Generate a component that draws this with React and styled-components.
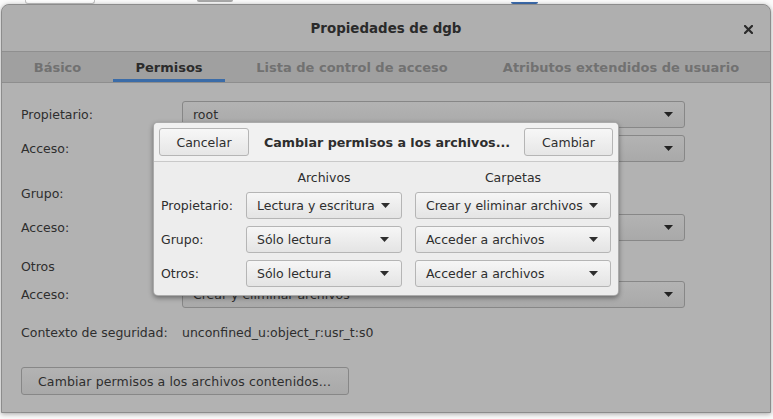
import React from "react";
import styled, { createGlobalStyle } from "styled-components";

const GlobalStyle = createGlobalStyle`
  html, body { margin: 0; padding: 0; background: #ffffff; }
  body { font-family: "DejaVu Sans", sans-serif; font-size: 12.5px; color: #2e2e2e; }
  #root { width: 773px; height: 419px; overflow: hidden; }
`;

const Screen = styled.div`
  width: 773px;
  height: 419px;
  display: flex;
  flex-direction: column;
  background: #fbfbfb;
`;

const BackStrip = styled.div`
  height: 4px;
  display: flex;
  align-items: flex-start;
  position: relative;
  z-index: 0;
`;

const BackBit = styled.div`
  margin-left: ${(p) => p.$left}px;
  width: ${(p) => p.$w}px;
  height: ${(p) => p.$h}px;
  margin-top: ${(p) => p.$top || 0}px;
  background: ${(p) => p.$bg};
  border: ${(p) => p.$border || "none"};
  border-top: none;
  border-radius: 0 0 3px 3px;
`;

const Dialog = styled.div`
  position: relative;
  z-index: 1;
  margin-left: 1px;
  width: 768px;
  height: 407px;
  background: #b2b2b2;
  border: 1px solid #8c8c8c;
  border-radius: 8px 8px 0 0;
  box-shadow: 0 1px 5px rgba(0, 0, 0, 0.35);
  display: flex;
  flex-direction: column;
`;

const TitleBar = styled.div`
  height: 46px;
  flex: none;
  display: flex;
  align-items: center;
  justify-content: center;
  position: relative;
  background: #afafaf;
  border-bottom: 1px solid #8f8f8f;
  border-radius: 8px 8px 0 0;
`;

const Title = styled.div`
  font-weight: bold;
  font-size: 13.4px;
  color: #2a2a2a;
`;

const Close = styled.div`
  position: absolute;
  right: 17px;
  top: 20px;
  width: 9px;
  height: 9px;
  display: flex;
`;

const TabBar = styled.div`
  height: 30px;
  flex: none;
  display: flex;
  background: #a0a0a0;
  border-bottom: 1px solid #8e8e8e;
`;

const Tab = styled.div`
  width: ${(p) => p.$w}px;
  flex: none;
  display: flex;
  align-items: center;
  justify-content: center;
  font-weight: bold;
  font-size: 13px;
  color: ${(p) => (p.$active ? "#2c2c2c" : "#717171")};
  box-shadow: ${(p) => (p.$active ? "inset 0 -3px 0 #3b6ca8" : "none")};
  padding-top: 1px;
  box-sizing: border-box;
`;

const Body = styled.div`
  flex: 1;
  display: flex;
  flex-direction: column;
  padding: 18px 0 0 19px;
`;

const Section = styled.div`
  display: grid;
  grid-template-columns: 161px 503px;
  row-gap: 7px;
  margin-bottom: ${(p) => p.$mb || 17}px;
`;

const Label = styled.div`
  display: flex;
  align-items: center;
  height: ${(p) => p.$h || 27}px;
  color: #2e2e2e;
`;

const Value = styled.div`
  display: flex;
  align-items: center;
  height: 15px;
  color: #2e2e2e;
`;

const DimCombo = styled.div`
  box-sizing: border-box;
  height: 27px;
  width: ${(p) => (p.$w ? `${p.$w}px` : "auto")};
  display: flex;
  align-items: center;
  padding: 0 11px 0 10px;
  border: 1px solid #878787;
  border-radius: 3px;
  background: linear-gradient(#b3b3b3, #a9a9a9);
  color: #2e2e2e;
`;

const ComboText = styled.span`
  flex: 1;
  white-space: nowrap;
`;

const Arrow = ({ color = "#2e2e2e", ml = 6 }) => (
  <svg width="9" height="5" viewBox="0 0 9 5" style={{ marginLeft: ml, flex: "none" }}>
    <polygon points="0,0 9,0 4.5,5" fill={color} />
  </svg>
);

const DimButton = styled.div`
  align-self: flex-start;
  box-sizing: border-box;
  height: 28px;
  width: 328px;
  margin-top: 10px;
  padding: 0 0 0 16px;
  display: flex;
  align-items: center;
  border: 1px solid #878787;
  border-radius: 3px;
  background: linear-gradient(#b3b3b3, #a9a9a9);
  color: #2e2e2e;
  letter-spacing: 0.12px;
`;

const Popover = styled.div`
  position: absolute;
  left: 151px;
  top: 117px;
  width: 466px;
  height: 174px;
  box-sizing: border-box;
  background: #ededed;
  border: 1px solid rgba(0, 0, 0, 0.28);
  border-radius: 5px;
  box-shadow: 0 2px 5px rgba(0, 0, 0, 0.4);
  display: flex;
  flex-direction: column;
  overflow: hidden;
`;

const PopHeader = styled.div`
  display: flex;
  align-items: center;
  padding: 5px;
  background: #f1f1f1;
  border-bottom: 1px solid #c9c9c9;
`;

const PopTitle = styled.div`
  flex: 1;
  text-align: center;
  font-weight: bold;
  font-size: 12.7px;
  color: #2e2e2e;
  margin-left: 1px;
`;

const PopButton = styled.div`
  box-sizing: border-box;
  height: 28px;
  width: ${(p) => p.$w}px;
  display: flex;
  align-items: center;
  justify-content: center;
  border: 1px solid #b5b5b5;
  border-radius: 3px;
  background: linear-gradient(#f7f7f7, #e6e6e6);
  color: #2e2e2e;
`;

const PopGrid = styled.div`
  display: grid;
  grid-template-columns: 77px 156px 201px;
  column-gap: 8px;
  row-gap: 7px;
  padding: 8px 7px 0 7px;
  & > :nth-child(3n) { margin-left: 5px; }
`;

const ColHead = styled.div`
  height: 15px;
  line-height: 15px;
  text-align: center;
  color: #2e2e2e;
`;

const PopCombo = styled.div`
  box-sizing: border-box;
  height: 27px;
  display: flex;
  align-items: center;
  padding: 0 12px 0 10px;
  border: 1px solid #b5b5b5;
  border-radius: 3px;
  background: linear-gradient(#f6f6f6, #e4e4e4);
  color: #2e2e2e;
`;

const rows = [
  ["Propietario:", "Lectura y escritura", "Crear y eliminar archivos"],
  ["Grupo:", "Sólo lectura", "Acceder a archivos"],
  ["Otros:", "Sólo lectura", "Acceder a archivos"],
];

export default function App() {
  return (
    <>
      <GlobalStyle />
      <Screen>
        <BackStrip>
          <BackBit $left={25} $w={68} $h={3} $bg="#ffffff" $border="1px solid #c4c4c4" />
          <BackBit $left={102} $w={36} $h={2} $bg="#a9a9a9" />
          <BackBit $left={278} $w={27} $h={2} $top={2} $bg="#3d6db0" />
        </BackStrip>
        <Dialog>
          <TitleBar>
            <Title>Propiedades de dgb</Title>
            <Close>
              <svg width="9" height="9" viewBox="0 0 9 9">
                <path d="M1 1 L8 8 M8 1 L1 8" stroke="#2a2a2a" strokeWidth="2.2" strokeLinecap="square" />
              </svg>
            </Close>
          </TitleBar>
          <TabBar>
            <Tab $w={111}>Básico</Tab>
            <Tab $w={112} $active>Permisos</Tab>
            <Tab $w={254}>Lista de control de acceso</Tab>
            <Tab $w={284}>Atributos extendidos de usuario</Tab>
          </TabBar>
          <Body>
            <Section $mb={18}>
              <Label>Propietario:</Label>
              <DimCombo>
                <ComboText>root</ComboText>
                <Arrow color="#232323" />
              </DimCombo>
              <Label>Acceso:</Label>
              <DimCombo>
                <ComboText>Crear y eliminar archivos</ComboText>
                <Arrow color="#232323" />
              </DimCombo>
            </Section>
            <Section>
              <Label>Grupo:</Label>
              <DimCombo $w={110}>
                <ComboText>root</ComboText>
                <Arrow color="#232323" />
              </DimCombo>
              <Label>Acceso:</Label>
              <DimCombo>
                <ComboText>Crear y eliminar archivos</ComboText>
                <Arrow color="#232323" />
              </DimCombo>
            </Section>
            <Section>
              <Label $h={16}>Otros</Label>
              <div />
              <Label>Acceso:</Label>
              <DimCombo>
                <ComboText>Crear y eliminar archivos</ComboText>
                <Arrow color="#232323" />
              </DimCombo>
            </Section>
            <Section>
              <Value>Contexto de seguridad:</Value>
              <Value>unconfined_u:object_r:usr_t:s0</Value>
            </Section>
            <DimButton>Cambiar permisos a los archivos contenidos...</DimButton>
          </Body>
          <Popover>
            <PopHeader>
              <PopButton $w={90}>Cancelar</PopButton>
              <PopTitle>Cambiar permisos a los archivos...</PopTitle>
              <PopButton $w={89}>Cambiar</PopButton>
            </PopHeader>
            <PopGrid>
              <div />
              <ColHead>Archivos</ColHead>
              <ColHead>Carpetas</ColHead>
              {rows.map(([label, a, b]) => (
                <React.Fragment key={label}>
                  <Label>{label}</Label>
                  <PopCombo>
                    <ComboText>{a}</ComboText>
                    <Arrow />
                  </PopCombo>
                  <PopCombo>
                    <ComboText>{b}</ComboText>
                    <Arrow />
                  </PopCombo>
                </React.Fragment>
              ))}
            </PopGrid>
          </Popover>
        </Dialog>
      </Screen>
    </>
  );
}
